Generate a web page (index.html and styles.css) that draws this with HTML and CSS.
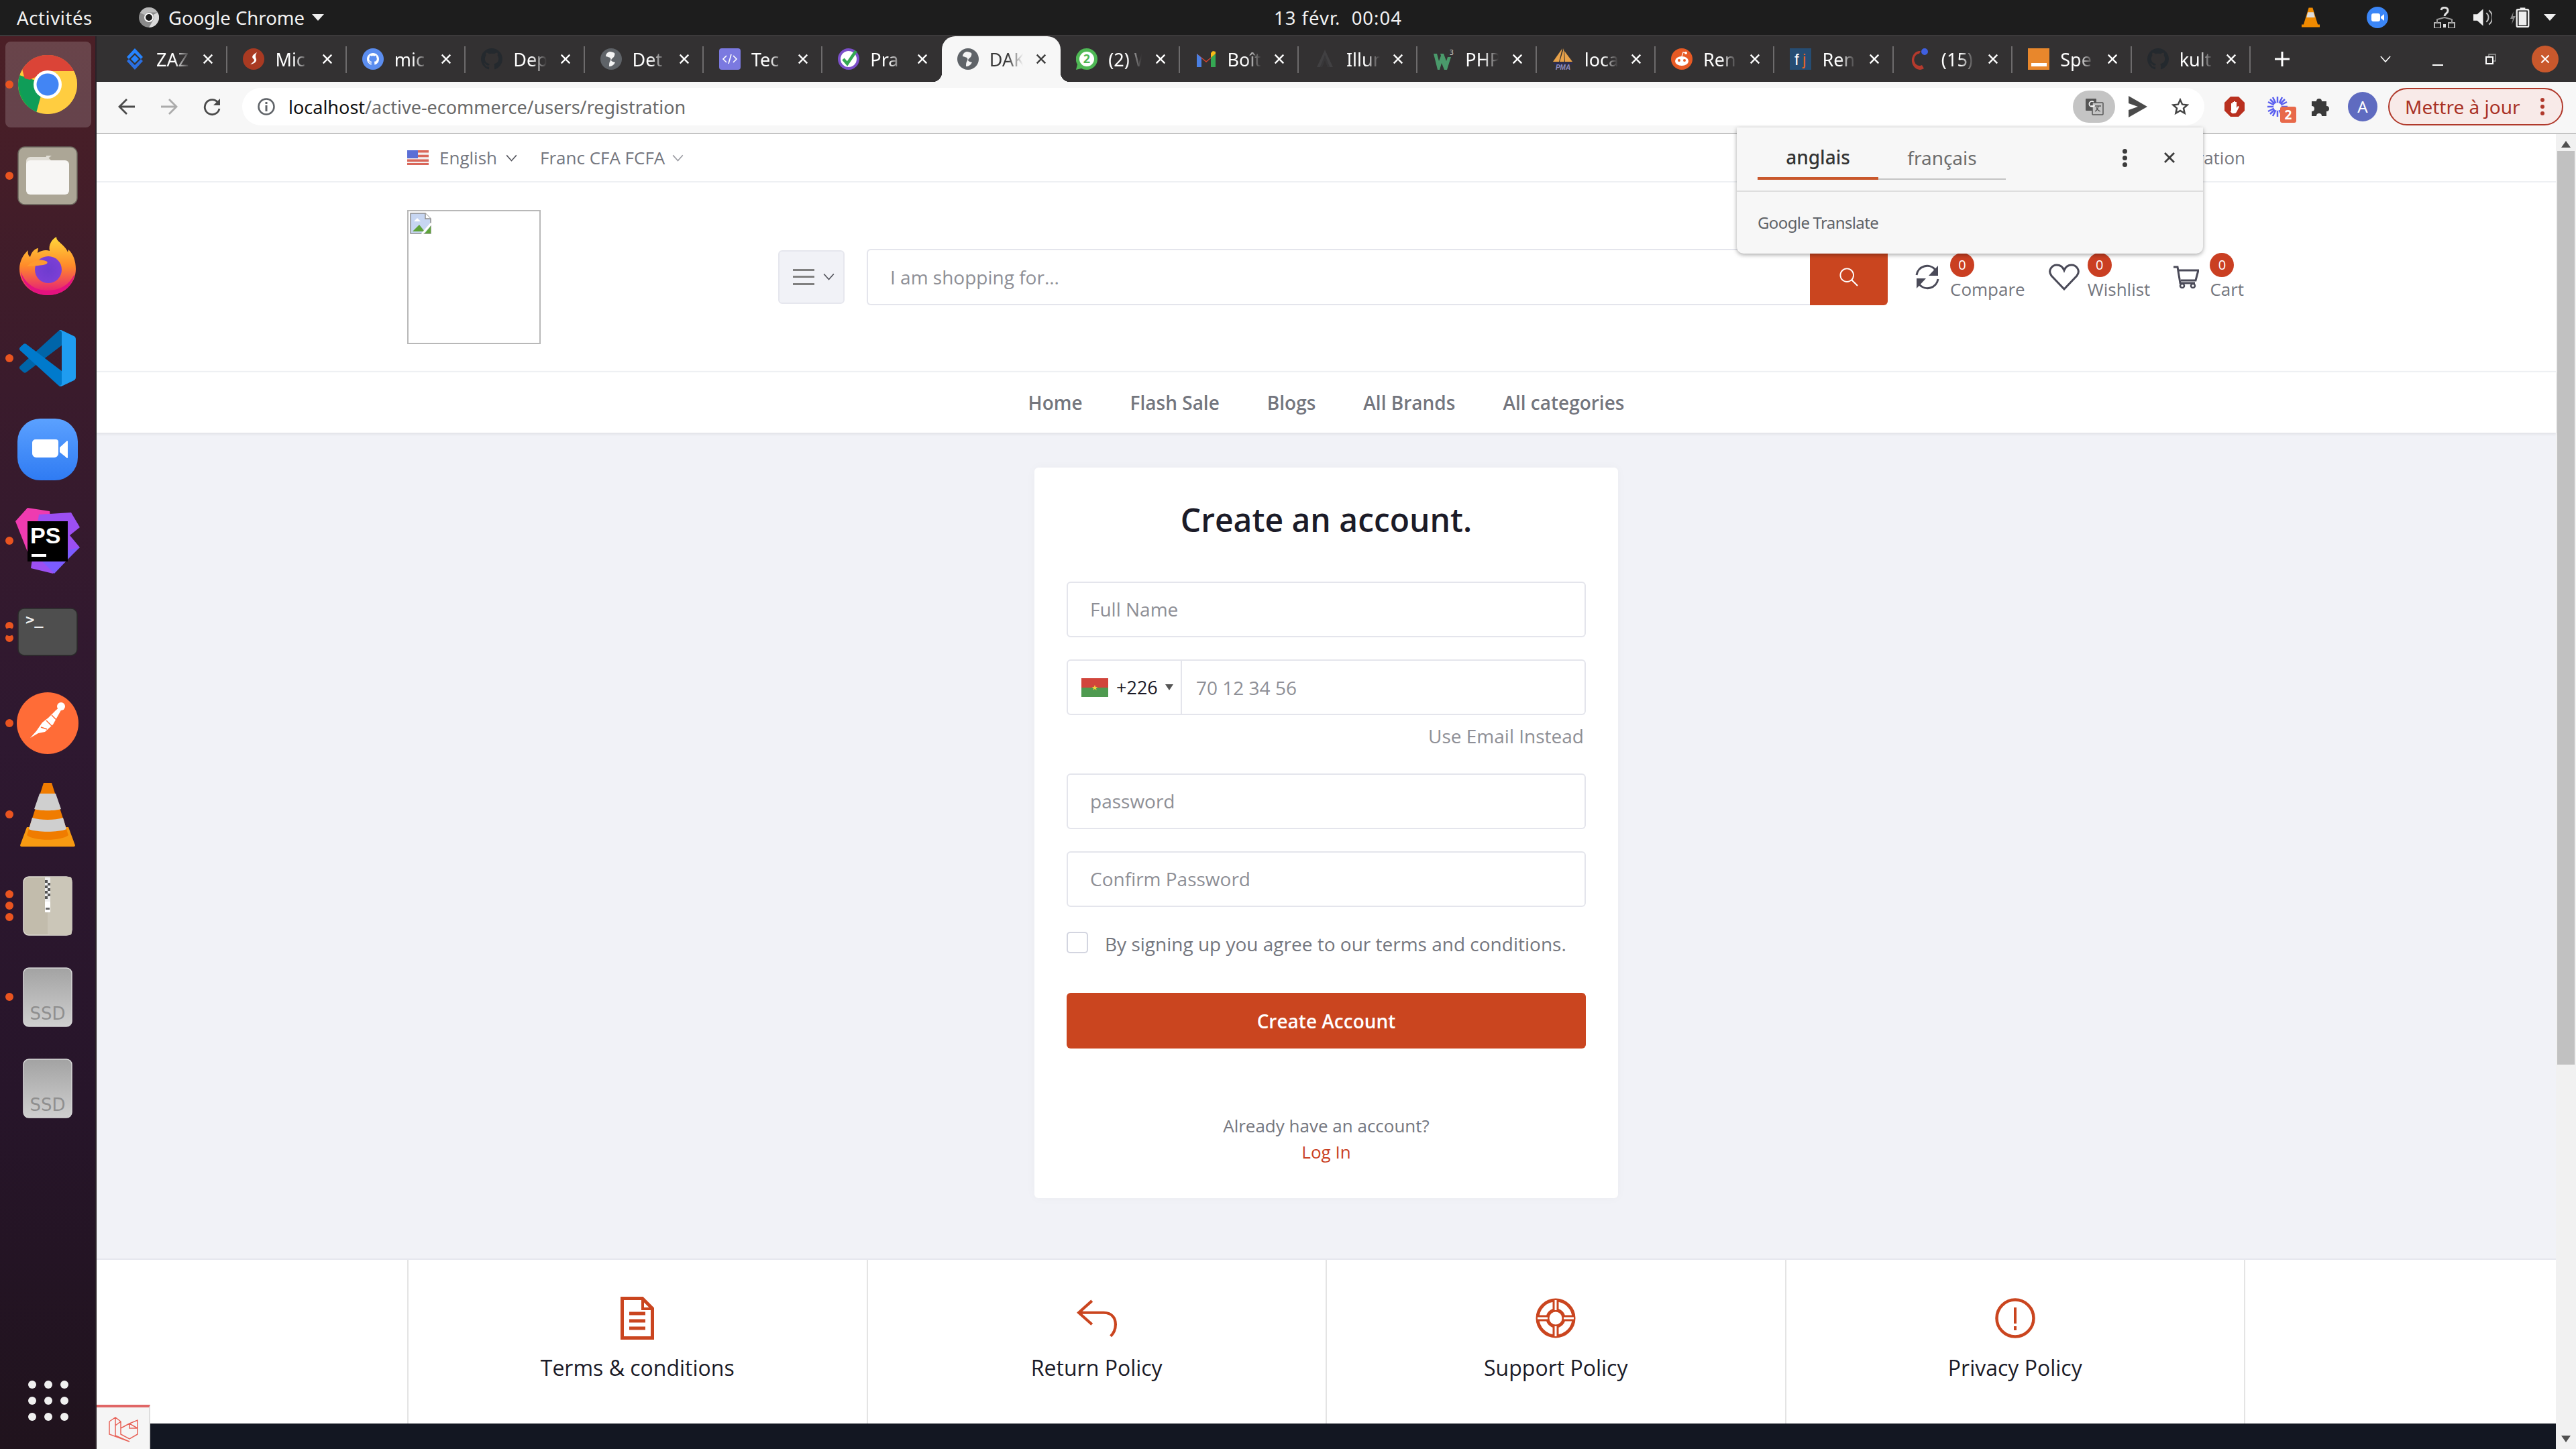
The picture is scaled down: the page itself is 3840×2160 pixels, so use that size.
FILE: index.html
```html
<!DOCTYPE html>
<html lang="fr">
<head>
<meta charset="utf-8">
<title>Create an account</title>
<link rel="stylesheet" href="styles.css">
</head>
<body>
<svg class="defs" width="0" height="0">
  <symbol id="gh" viewBox="0 0 16 16"><path d="M8 0C3.58 0 0 3.58 0 8c0 3.54 2.29 6.53 5.47 7.59.4.07.55-.17.55-.38 0-.19-.01-.82-.01-1.49-2.01.37-2.53-.49-2.69-.94-.09-.23-.48-.94-.82-1.13-.28-.15-.68-.52-.01-.53.63-.01 1.08.58 1.23.82.72 1.21 1.87.87 2.33.66.07-.52.28-.87.51-1.07-1.78-.2-3.64-.89-3.64-3.95 0-.87.31-1.59.82-2.15-.08-.2-.36-1.02.08-2.12 0 0 .67-.21 2.2.82.64-.18 1.32-.27 2-.27.68 0 1.36.09 2 .27 1.53-1.04 2.2-.82 2.2-.82.44 1.1.16 1.92.08 2.12.51.56.82 1.27.82 2.15 0 3.07-1.87 3.75-3.65 3.95.29.25.54.73.54 1.48 0 1.07-.01 1.93-.01 2.2 0 .21.15.46.55.38A8.013 8.013 0 0016 8c0-4.42-3.58-8-8-8z"/></symbol>
  <symbol id="globe" viewBox="0 0 32 32"><circle cx="16" cy="16" r="16" fill="#5f6368"/><path d="M14 5c-4 1-6 4-6 7 3 1 6 1 7 3 1 2 0 3-1 5-1 2-1 4-1 7 4 0 7-2 9-6-2-1-5-1-6-3 0-2 2-3 4-5 1-2 2-4 1-6-2-1-4-2-7-2z" fill="#f4f4f4"/></symbol>
  <symbol id="x" viewBox="0 0 20 20"><path d="M3 3l14 14M17 3L3 17" fill="none" stroke="currentColor" stroke-width="2.6"/></symbol>
  <symbol id="chev" viewBox="0 0 18 12"><path d="M1 1.5l8 9 8-9" fill="none" stroke="currentColor" stroke-width="1.7"/></symbol>
  <symbol id="ssd" viewBox="0 0 74 89"><defs><linearGradient id="ssdg" x1="0" y1="0" x2="0" y2="1"><stop offset="0" stop-color="#a3a3a3"/><stop offset="1" stop-color="#cfcfcf"/></linearGradient></defs><rect x="1" y="1" width="72" height="87" rx="8" fill="url(#ssdg)" stroke="#d8d8d8" stroke-width="1.5"/></symbol>
</svg>

<header class="system-bar">
  <span class="sys-left">
    <span class="sys-activities">Activités</span>
    <svg class="sys-chrome" viewBox="0 0 30 30"><circle cx="15" cy="15" r="15" fill="#8b8b8b"/><path d="M15 0a15 15 0 0 1 13 7.500H15a7.500 7.500 0 0 0-6.500 3.800L2 8A15 15 0 0 1 15 0z" fill="#b9b9b9"/><path d="M28 7.500A15 15 0 0 1 15 30l6.500-11.200A7.500 7.500 0 0 0 21.500 11z" fill="#d9d9d9"/><circle cx="15" cy="15" r="6" fill="#1d1d1d" stroke="#fff" stroke-width="2"/></svg>
    <span class="sys-app">Google Chrome</span>
    <i class="sys-caret"></i>
  </span>
  <span class="sys-clock">13 févr.&nbsp; 00:04</span>
  <span class="sys-tray">
    <svg class="tray-vlc" viewBox="0 0 28 30"><path d="M11 0h6l8 26h3v4H0v-4h3z" fill="#f08a00"/><path d="M9.500 7h9l2 8H7.500z" fill="#ddd"/></svg>
    <svg class="tray-zoom" viewBox="0 0 32 32"><circle cx="16" cy="16" r="16" fill="#3b86f7"/><rect x="7" y="10" width="13" height="12" rx="3" fill="#fff"/><path d="M21 15l5-4v10l-5-4z" fill="#fff"/></svg>
    <svg class="tray-net" viewBox="0 0 32 32"><rect x="1" y="24" width="9" height="8" fill="none" stroke="#b5b5b5" stroke-width="2"/><rect x="22" y="24" width="9" height="8" fill="none" stroke="#b5b5b5" stroke-width="2"/><path d="M5 24v-5l11-3 11 3v5" fill="none" stroke="#9a9a9a" stroke-width="2"/><path d="M11 5c1-5 10-5 10 1 0 4-5 4-5 8" fill="none" stroke="#e0e0e0" stroke-width="3"/><rect x="14" y="26" width="4" height="5" fill="#e0e0e0"/></svg>
    <svg class="tray-vol" viewBox="0 0 30 30"><path d="M1 10h6l9-8v26l-9-8H1z" fill="#eee"/><path d="M21 8a9 9 0 0 1 0 14M25 4a14 14 0 0 1 0 22" fill="none" stroke="#bbb" stroke-width="2"/></svg>
    <svg class="tray-bat" viewBox="0 0 36 30"><path d="M5 6L0 17h4l-2 9 6-13H4z" fill="#888"/><rect x="10" y="3" width="18" height="26.500" rx="2" fill="none" stroke="#eee" stroke-width="2.500"/><rect x="15" y="0" width="8" height="3" fill="#eee"/><rect x="13" y="6" width="12" height="21" fill="#eee"/></svg>
    <i class="sys-caret"></i>
  </span>
</header>

<div class="desktop">
  <nav class="dock">
    <div class="dock-item active"><i class="pip"></i>
      <svg class="d-chrome" viewBox="0 0 88 88"><defs><clipPath id="cc"><circle cx="44" cy="44" r="44"/></clipPath></defs><g clip-path="url(#cc)"><rect width="88" height="88" fill="#ffca3a"/><path d="M44 44L2 30 -6 88H26z" fill="#12a150"/><path d="M0-2H88V24H44L11 40z" fill="#db4437"/><path d="M44 44L-8 30 26 100H34z" fill="#0f9d58"/><path d="M88 24H44L26 90 44 100H100V24z" fill="#ffcd40"/><path d="M-2 -4H90V24H44C36 24 28 28 24 34L6 8z" fill="#db4437"/></g><circle cx="44" cy="44" r="21" fill="#fff"/><circle cx="44" cy="44" r="16.500" fill="#4285f4"/></svg>
    </div>
    <div class="dock-item"><i class="pip"></i>
      <svg class="d-files" viewBox="0 0 90 88"><rect x="1" y="1" width="88" height="86" rx="10" fill="#aca696" stroke="#6a665c" stroke-width="1.500"/><path d="M13 22a6 6 0 0 1 6-6h26l6 6v6H13z" fill="#e1ded6"/><rect x="13" y="21" width="64" height="51" rx="6" fill="#f7f6f4"/><path d="M42 21l9-7h-8z" fill="#e1ded6"/></svg>
    </div>
    <div class="dock-item raise">
      <svg class="d-firefox" viewBox="0 0 84 87"><defs><linearGradient id="ff1" x1="0.5" y1="0" x2="0.5" y2="1"><stop offset="0" stop-color="#ffd83a"/><stop offset="0.5" stop-color="#ff8a2a"/><stop offset="1" stop-color="#e3127f"/></linearGradient><radialGradient id="ff2"><stop offset="0" stop-color="#6e3ccf"/><stop offset="1" stop-color="#7b3fd6"/></radialGradient></defs><path d="M42 87C18 87 0 70 0 48 0 36 6 26 13 20c-1 4 0 8 3 10 2-8 8-13 12-13l-1 7c6-4 13-5 18-3C43 12 48 4 55 0c0 6 6 8 11 14 3 3 5 6 6 9l1-4c7 6 11 17 11 29 0 22-18 39-42 39z" fill="url(#ff1)"/><circle cx="43" cy="49" r="20" fill="url(#ff2)"/><path d="M11 44c8-8 18-12 28-8 4 1 3 4 0 5-7 2-14 2-28 3z" fill="#ff9a2f"/><path d="M2 52c6 18 22 28 40 28 18 0 32-8 40-24-3 20-20 31-40 31C22 87 4 72 2 52z" fill="#e3127f"/></svg>
    </div>
    <div class="dock-item"><i class="pip"></i>
      <svg class="d-code" viewBox="0 0 100 100" preserveAspectRatio="none"><path fill="#0065A9" d="M96.46 10.8 75.86.87a6.230 6.230 0 0 0-7.100 1.200L1.300 63.600a4.160 4.160 0 0 0 0 6.160l5.500 5a4.160 4.160 0 0 0 5.300.24L93.300 13.400c2.730-2.070 6.630-.13 6.630 3.300v-.24a6.250 6.250 0 0 0-3.470-5.660Z"/><path fill="#007ACC" d="m96.460 89.200-20.600 9.920a6.230 6.230 0 0 1-7.100-1.200L1.300 36.400a4.160 4.160 0 0 1 0-6.160l5.500-5a4.160 4.160 0 0 1 5.300-.24L93.300 86.600c2.730 2.070 6.630.13 6.630-3.300v.24a6.250 6.250 0 0 1-3.470 5.660Z"/><path fill="#1F9CF0" d="M75.860 99.130a6.230 6.230 0 0 1-7.100-1.200c2.300 2.300 6.240.67 6.240-2.600V4.670c0-3.270-3.940-4.900-6.240-2.600a6.230 6.230 0 0 1 7.100-1.200l20.600 9.900A6.250 6.250 0 0 1 100 16.400v67.200a6.250 6.250 0 0 1-3.540 5.630Z"/></svg>
    </div>
    <div class="dock-item">
      <svg class="d-zoom" viewBox="0 0 90 92"><defs><linearGradient id="zg" x1="0" y1="0" x2="0" y2="1"><stop offset="0" stop-color="#5ba1ff"/><stop offset="1" stop-color="#2f7bf3"/></linearGradient></defs><rect width="90" height="92" rx="34" fill="url(#zg)"/><path d="M22 36a5 5 0 0 1 5-5h30a4 4 0 0 1 4 4v17a6 6 0 0 1-6 6H28a6 6 0 0 1-6-6zM63 43l10-9a1 1 0 0 1 2 0v24a1 1 0 0 1-2 0l-10-8z" fill="#fff"/></svg>
    </div>
    <div class="dock-item"><i class="pip"></i>
      <svg class="d-ps" viewBox="0 0 96 98"><path d="M0 20l18-20 33 5 8 60-40 3z" fill="#ef3bb0"/><path d="M35 10l48-3 13 22-15 12 15 18-40 39-33-8z" fill="#9c4ff2"/><path d="M35 75l60-16-37 39z" fill="#7b5cff"/><rect x="18" y="20" width="60" height="60" fill="#000"/><text class="ps-text" x="22" y="53">PS</text><rect x="24" y="69" width="22" height="4" fill="#fff"/></svg>
    </div>
    <div class="dock-item"><i class="pip double"></i>
      <svg class="d-term" viewBox="0 0 90 72"><rect x="1" y="1" width="88" height="70" rx="9" fill="#4e4e4e" stroke="#2a2a2a" stroke-width="1.500"/><text class="term-text" x="12" y="25">&gt;_</text></svg>
    </div>
    <div class="dock-item"><i class="pip"></i>
      <svg class="d-post" viewBox="0 0 92 92"><circle cx="46" cy="46" r="46" fill="#ff6c37"/><path d="M20 68l12-7 10-2 12-11 9-16 5-9-3-2-7 6-11 11-9 7-9 13z" fill="#fff"/><path d="M36 52l9 3M44 42l8 8M52 34l7 7" stroke="#ff6c37" stroke-width="1.500" fill="none"/><circle cx="66" cy="21" r="6" fill="#fff"/></svg>
    </div>
    <div class="dock-item"><i class="pip"></i>
      <svg class="d-vlc" viewBox="0 0 82 95"><path d="M10 66h62l10 27a2 2 0 0 1-2 2H2a2 2 0 0 1-2-2z" fill="#f79a12"/><path d="M35 0h12l25 78c-10 9-52 9-62 0z" fill="#f07c00"/><path d="M29 16h24l8 23c-8 3-32 3-40 0z" fill="#cfcfcf"/><path d="M18 52c12 4 34 4 46 0l5 17c-12 5-44 5-56 0z" fill="#cfcfcf"/></svg>
    </div>
    <div class="dock-item"><i class="pip triple"></i>
      <svg class="d-zip" viewBox="0 0 74 89"><rect x="1" y="1" width="72" height="87" rx="8" fill="#c2bcac" stroke="#dedbd2" stroke-width="1.500"/><rect x="37" y="1" width="36" height="87" rx="4" fill="#cbc6b8"/><rect x="33" y="2" width="8" height="38" fill="#efefef"/><path d="M33 6h4v4h-4zM37 10h4v4h-4zM33 14h4v4h-4zM37 18h4v4h-4zM33 22h4v4h-4zM37 26h4v4h-4zM33 30h4v4h-4z" fill="#555"/><rect x="33" y="38" width="8" height="16" rx="1" fill="#fff"/><rect x="34" y="47" width="6" height="3" fill="#666"/></svg>
    </div>
    <div class="dock-item"><i class="pip"></i>
      <svg class="d-ssd" viewBox="0 0 74 89"><use href="#ssd"/><text class="ssd-text" x="37" y="78">SSD</text></svg>
    </div>
    <div class="dock-item">
      <svg class="d-ssd" viewBox="0 0 74 89"><use href="#ssd"/><text class="ssd-text" x="37" y="78">SSD</text></svg>
    </div>
    <div class="dock-apps">
      <i></i><i></i><i></i><i></i><i></i><i></i><i></i><i></i><i></i>
    </div>
  </nav>

  <main class="browser">
    <div class="tabstrip">
      <div class="tabs">
        <div class="tab"><svg class="fav" viewBox="0 0 32 32"><path d="M16 0l12 13-3 3-9-9-9 9-3-3z" fill="#2684ff"/><path d="M16 32L4 19l3-3 9 9 9-9 3 3z" fill="#2b6fe0"/><path d="M16 10l6 6-6 6-6-6z" fill="#2684ff"/></svg><span class="tab-title">ZAZ</span><svg class="tab-x"><use href="#x"/></svg></div>
        <div class="tab"><svg class="fav" viewBox="0 0 32 32"><circle cx="16" cy="16" r="16" fill="#a93a22"/><path d="M21 6c-6 3-9 7-5 10 3 2-1 5-5 8 6-1 10-4 9-8-1-3-2-5 1-10z" fill="#fff"/></svg><span class="tab-title">Mic</span><svg class="tab-x"><use href="#x"/></svg></div>
        <div class="tab"><svg class="fav" viewBox="0 0 32 32"><circle cx="16" cy="16" r="16" fill="#5b8def"/><use href="#gh" x="7" y="7" width="18" height="18" fill="#fff"/></svg><span class="tab-title">mic</span><svg class="tab-x"><use href="#x"/></svg></div>
        <div class="tab"><svg class="fav" viewBox="0 0 16 16" fill="#24292e"><use href="#gh"/></svg><span class="tab-title">Dep</span><svg class="tab-x"><use href="#x"/></svg></div>
        <div class="tab"><svg class="fav"><use href="#globe"/></svg><span class="tab-title">Det</span><svg class="tab-x"><use href="#x"/></svg></div>
        <div class="tab"><svg class="fav" viewBox="0 0 32 32"><rect width="32" height="32" rx="4" fill="#7b79e0"/><path d="M11 11l-5 5 5 5M21 11l5 5-5 5M18 9l-4 14" fill="none" stroke="#fff" stroke-width="1.600"/></svg><span class="tab-title">Tec</span><svg class="tab-x"><use href="#x"/></svg></div>
        <div class="tab no-sep"><svg class="fav" viewBox="0 0 32 32"><circle cx="16" cy="16" r="14" fill="#fff" stroke="#7b4fc9" stroke-width="4"/><path d="M8 16l6 7L27 4" fill="none" stroke="#35a853" stroke-width="4.500"/></svg><span class="tab-title">Pra</span><svg class="tab-x"><use href="#x"/></svg></div>
        <div class="tab active"><svg class="fav"><use href="#globe"/></svg><span class="tab-title">DAK</span><svg class="tab-x"><use href="#x"/></svg></div>
        <div class="tab"><svg class="fav" viewBox="0 0 32 32"><path d="M16 0a16 16 0 0 1 0 32c-3 0-6-1-8-2l-8 2 2-8A16 16 0 0 1 16 0z" fill="#4fb855"/><circle cx="16" cy="16" r="11" fill="#fff"/><text class="wa-text" x="16" y="22">2</text></svg><span class="tab-title">(2) W</span><svg class="tab-x"><use href="#x"/></svg></div>
        <div class="tab"><svg class="fav" viewBox="0 0 32 32"><path d="M2 28V8l14 11L30 8v20h-7V15l-7 6-7-6v13z" fill="#d9432f"/><path d="M2 28h7V14L2 8z" fill="#4a7fe3"/><path d="M23 28h7V8l-7 6z" fill="#35a853"/><path d="M23 14l7-6V5l-4-1-3 3z" fill="#f6bb17"/></svg><span class="tab-title">Boît</span><svg class="tab-x"><use href="#x"/></svg></div>
        <div class="tab"><svg class="fav" viewBox="0 0 32 32"><path d="M16 2l12 26h-5L16 12 9 28H4z" fill="#414042"/><path d="M16 10l7 18h-3l-4-10-4 10H9z" fill="#383739"/></svg><span class="tab-title">Illum</span><svg class="tab-x"><use href="#x"/></svg></div>
        <div class="tab"><svg class="fav" viewBox="0 0 32 32"><path d="M1 8h5l3 11 3-8-1-3h5l4 11 2-6h5l-6 19h-4l-4-10-3 10H7z" fill="#4a9a6b"/><text class="w3-text" x="25" y="10">3</text></svg><span class="tab-title">PHP</span><svg class="tab-x"><use href="#x"/></svg></div>
        <div class="tab"><svg class="fav" viewBox="0 0 32 32"><path d="M15 0L10 20H1zM17 0l1 20h-7zM18 4l12 16H19z" fill="#e8a24a"/><path d="M2 21h28v3H2z" fill="#2d2c55"/><text class="pma-text" x="16" y="32">PMA</text></svg><span class="tab-title">loca</span><svg class="tab-x"><use href="#x"/></svg></div>
        <div class="tab"><svg class="fav" viewBox="0 0 32 32"><circle cx="16" cy="16" r="16" fill="#e85a24"/><ellipse cx="16" cy="19" rx="10" ry="7" fill="#fff"/><circle cx="12" cy="18" r="2" fill="#e85a24"/><circle cx="20" cy="18" r="2" fill="#e85a24"/><circle cx="22" cy="7" r="2" fill="#fff"/><path d="M16 12l2-6 4 1" fill="none" stroke="#fff" stroke-width="1.200"/></svg><span class="tab-title">Ren</span><svg class="tab-x"><use href="#x"/></svg></div>
        <div class="tab"><svg class="fav" viewBox="0 0 32 32"><rect width="32" height="32" fill="#264d73"/><text class="fj-text" x="7" y="25">f</text><text class="fj-text fj-j" x="19" y="25">j</text></svg><span class="tab-title">Ren</span><svg class="tab-x"><use href="#x"/></svg></div>
        <div class="tab"><svg class="fav" viewBox="0 0 32 32"><path d="M17 4A12 14 0 1 0 22 30l-3-5a8 9 0 1 1-4-17z" fill="#b53a2d"/><circle cx="23" cy="5" r="5" fill="#3f5fe0"/></svg><span class="tab-title">(15)</span><svg class="tab-x"><use href="#x"/></svg></div>
        <div class="tab"><svg class="fav" viewBox="0 0 32 32"><rect width="32" height="32" fill="#e8872c"/><rect x="5" y="22" width="23" height="5" fill="#fff"/></svg><span class="tab-title">Spe</span><svg class="tab-x"><use href="#x"/></svg></div>
        <div class="tab last"><svg class="fav" viewBox="0 0 16 16" fill="#24292e"><use href="#gh"/></svg><span class="tab-title">kult</span><svg class="tab-x"><use href="#x"/></svg></div>
      </div>
      <svg class="win-plus" viewBox="0 0 24 24"><path d="M12 1v22M1 12h22" stroke="#fff" stroke-width="3"/></svg>
      <svg class="win-down"><use href="#chev"/></svg>
      <i class="win-min"></i>
      <svg class="win-restore" viewBox="0 0 16 16"><rect x="1" y="5" width="10" height="10" fill="none" stroke="#fff" stroke-width="2"/><path d="M5 4V1h10v10h-3" fill="none" stroke="#999" stroke-width="1.400"/></svg>
      <span class="win-close"><svg viewBox="0 0 20 20"><use href="#x"/></svg></span>
    </div>

    <div class="toolbar">
      <svg class="tb-back" viewBox="0 0 26 26"><path d="M25 13H3M13 2L2 13l11 11" fill="none" stroke="currentColor" stroke-width="2.800"/></svg>
      <svg class="tb-fwd" viewBox="0 0 26 26"><path d="M1 13h22M13 2l11 11-11 11" fill="none" stroke="currentColor" stroke-width="2.800"/></svg>
      <svg class="tb-reload" viewBox="0 0 28 28"><path d="M23 8a11 11 0 1 0 2 9" fill="none" stroke="currentColor" stroke-width="2.800"/><path d="M26 2v10H16z" fill="currentColor"/></svg>
      <div class="omnibox">
        <svg class="omni-info" viewBox="0 0 26 26"><circle cx="13" cy="13" r="11.500" fill="none" stroke="#5f6368" stroke-width="2.500"/><rect x="11.500" y="11" width="3" height="9" fill="#5f6368"/><rect x="11.500" y="6" width="3" height="3" fill="#5f6368"/></svg>
        <span class="omni-url"><b>localhost</b>/active-ecommerce/users/registration</span>
        <span class="omni-translate"><svg viewBox="0 0 28 28"><rect x="1" y="2" width="16" height="18" rx="1" fill="#555"/><rect x="11" y="8" width="16" height="18" rx="1" fill="#c4c4c4" stroke="#555" stroke-width="1.500"/><path d="M13 7a4 4 0 1 0 0 6H9" fill="none" stroke="#fff" stroke-width="1.600"/><path d="M15 13h9M20 13c-1 5-3 7-5 8M17 15c1 3 3 5 6 6" fill="none" stroke="#555" stroke-width="1.300"/></svg></span>
        <svg class="omni-send" viewBox="0 0 28 32"><path d="M0 0l28 16L0 32v-11l14-5L0 11z" fill="#4a4a4a"/></svg>
        <svg class="omni-star" viewBox="0 0 24 24"><path d="M12 2.500l2.900 6.400 6.900.7-5.200 4.600 1.500 6.800-6.100-3.500-6.100 3.500 1.500-6.800L2.200 9.600l6.900-.7z" fill="none" stroke="#444" stroke-width="2.300"/></svg>
      </div>
      <svg class="ext-block" viewBox="0 0 32 32"><path d="M10 1h12l9 9v12l-9 9H10l-9-9V10z" fill="#b9301f"/><path d="M11 22V11h2v6-8h2v8-9h2v9-8h2v9l2-3 2 1-4 8a4 4 0 0 1-3 2h-1a4 4 0 0 1-5-4z" fill="#fff"/></svg>
      <span class="ext-burst"><svg viewBox="0 0 32 32"><path d="M16 1v30M1 16h30M5 5l22 22M27 5L5 27M9 2l14 28M23 2L9 30M2 9l28 14M30 9L2 23" stroke="#5a5ff0" stroke-width="2.500"/><circle cx="16" cy="16" r="6" fill="#f7f7f7"/></svg><b>2</b></span>
      <svg class="ext-puzzle" viewBox="0 0 30 32"><path d="M2 8h7a4 4 0 1 1 8 0h7v7a4 4 0 1 1 0 8v7h-7a4 4 0 1 0-8 0H2v-7a4 4 0 1 0 0-8z" fill="#3a3a3a"/></svg>
      <span class="avatar">A</span>
      <span class="update"><span>Mettre à jour</span><i class="update-dots"></i></span>
    </div>

    <div class="translate">
      <div class="tr-head">
        <div class="tr-tabs">
          <span class="tr-tab on">anglais</span>
          <span class="tr-tab">français</span>
        </div>
        <span class="tr-dots"></span>
        <svg class="tr-x" viewBox="0 0 20 20"><path d="M3 3l14 14M17 3L3 17" fill="none" stroke="#3c3c3c" stroke-width="2.800"/></svg>
      </div>
      <div class="tr-foot"><span class="tr-google">Google</span> <span class="tr-word">Translate</span></div>
    </div>

    <div class="viewport">
      <div class="page">
        <div class="topline">
          <div class="wrap topline-in">
            <svg class="flag-us" viewBox="0 0 32 22"><rect width="32" height="22" fill="#f3efef"/><path d="M0 0h32v3.400H0zM0 6.800h32v3.400H0zM0 13.600h32V17H0zM0 19h32v3H0z" fill="#d9675a"/><rect width="16" height="12" fill="#5b6fd6"/></svg>
            <span class="tl-item">English</span><svg class="tl-chev"><use href="#chev"/></svg>
            <span class="tl-item tl-currency">Franc CFA FCFA</span><svg class="tl-chev light"><use href="#chev"/></svg>
            <span class="tl-right">Registration</span>
          </div>
        </div>

        <div class="wrap head">
          <div class="logo"><svg class="broken" viewBox="0 0 32 32"><path d="M1 1h22l8 8v22H1z" fill="#c7d6f2" stroke="#8f8f8f" stroke-width="1.500"/><path d="M23 1v8h8" fill="#fff" stroke="#8f8f8f" stroke-width="1.500"/><path d="M4 28l10-10 8 10z" fill="#5fa33a"/><path d="M22 31l9-11v11z" fill="#5fa33a"/><path d="M18 32L32 16" stroke="#fff" stroke-width="3"/><path d="M6 13l5-5 5 5z" fill="#fff"/></svg></div>
          <div class="burger"><i class="bars"></i><svg class="burger-chev"><use href="#chev"/></svg></div>
          <div class="search">
            <input class="search-in" placeholder="I am shopping for...">
            <span class="search-btn"><svg viewBox="0 0 30 30"><circle cx="12" cy="12" r="10.500" fill="none" stroke="#fff" stroke-width="2"/><path d="M19.500 19.500L29 29" stroke="#fff" stroke-width="2.200"/></svg></span>
          </div>
          <div class="tools">
            <div class="tool"><svg class="tool-ic compare" viewBox="0 0 36 40"><path d="M2 17A16 16 0 0 1 30 9M34 23A16 16 0 0 1 6 31" fill="none" stroke="#4a4a58" stroke-width="3"/><path d="M34 3v15H20zM2 37V22h14z" fill="#4a4a58"/></svg><div class="tool-col"><span class="badge">0</span><span class="tool-label">Compare</span></div></div>
            <div class="tool"><svg class="tool-ic heart" viewBox="0 0 46 40"><path d="M23 38L4 18C-2 10 5 2 12 2c5 0 9 3 11 8 2-5 6-8 11-8 7 0 14 8 8 16z" fill="none" stroke="#4a4a58" stroke-width="3"/></svg><div class="tool-col"><span class="badge">0</span><span class="tool-label">Wishlist</span></div></div>
            <div class="tool"><svg class="tool-ic cart" viewBox="0 0 38 34"><path d="M0 2h6l4 24h22M8 7h29l-4 15H11" fill="none" stroke="#4a4a58" stroke-width="3"/><circle cx="13" cy="30" r="3" fill="none" stroke="#4a4a58" stroke-width="2.500"/><circle cx="29" cy="30" r="3" fill="none" stroke="#4a4a58" stroke-width="2.500"/></svg><div class="tool-col"><span class="badge">0</span><span class="tool-label">Cart</span></div></div>
          </div>
        </div>

        <nav class="mainnav">
          <a>Home</a><a>Flash Sale</a><a>Blogs</a><a>All Brands</a><a>All categories</a>
        </nav>

        <section class="main">
          <form class="card">
            <h1 class="card-title">Create an account.</h1>
            <input class="field" placeholder="Full Name">
            <div class="phone">
              <span class="dial"><svg class="flag-bf" viewBox="0 0 40 28"><rect width="40" height="14" fill="#d1453b"/><rect y="14" width="40" height="14" fill="#4f9a50"/><path d="M20 10l1.200 3h3l-2.400 2 1 3-2.800-1.900-2.800 1.900 1-3-2.400-2h3z" fill="#f3d23c"/></svg><span class="dial-code">+226</span><i class="dial-caret"></i></span>
              <input class="phone-in" placeholder="70 12 34 56">
            </div>
            <div class="use-email">Use Email Instead</div>
            <input class="field" placeholder="password">
            <input class="field second" placeholder="Confirm Password">
            <label class="agree"><i class="check"></i><span>By signing up you agree to our terms and conditions.</span></label>
            <div class="submit">Create Account</div>
            <p class="have">Already have an account?</p>
            <a class="login">Log In</a>
          </form>
        </section>

        <section class="policies">
          <div class="wrap policy-grid">
            <div class="policy"><svg class="p-ic" viewBox="0 0 50 64"><path d="M2.500 2.500h30l15 15v44h-45z" fill="none" stroke="#ca451f" stroke-width="5"/><path d="M33 3v15h15" fill="none" stroke="#ca451f" stroke-width="4"/><path d="M13 25h24M13 36h24M13 47h24" stroke="#ca451f" stroke-width="5"/></svg><span class="p-label">Terms &amp; conditions</span></div>
            <div class="policy"><svg class="p-ic" viewBox="0 0 58 54"><path d="M22 2L3 19l19 17M3 19h36c12 0 17 8 17 17 0 7-3 13-7 17" fill="none" stroke="#ca451f" stroke-width="4"/></svg><span class="p-label">Return Policy</span></div>
            <div class="policy"><svg class="p-ic" viewBox="0 0 60 60"><circle cx="30" cy="30" r="27" fill="none" stroke="#ca451f" stroke-width="5"/><circle cx="30" cy="30" r="12" fill="none" stroke="#ca451f" stroke-width="5"/><path d="M30 3v15M30 42v15M3 30h15M42 30h15" stroke="#ca451f" stroke-width="9"/><path d="M30 3v15M30 42v15M3 30h15M42 30h15" stroke="#fff" stroke-width="3"/></svg><span class="p-label">Support Policy</span></div>
            <div class="policy"><svg class="p-ic" viewBox="0 0 60 60"><circle cx="30" cy="30" r="27.500" fill="none" stroke="#ca451f" stroke-width="4.500"/><path d="M30 14v24M30 42v6" stroke="#ca451f" stroke-width="4"/></svg><span class="p-label">Privacy Policy</span></div>
          </div>
        </section>
        <footer class="darkbar"></footer>
      </div>
      <aside class="scrollbar"><i class="sb-up"></i><i class="sb-thumb"></i><i class="sb-down"></i></aside>
    </div>

    <div class="debugbar"><svg viewBox="0 0 44 40"><path d="M1 9l9-6 8 6v19l13 7 12-7v-9l-12-7-13 7M10 3v27l21 9M18 9l-8 6M31 12v7l12 0M31 12l-13 7 0 9M31 12l12-5 0 12M1 9v19l30 11" fill="none" stroke="#e8645a" stroke-width="1.500"/></svg></div>
  </main>
</div>
</body>
</html>
```

FILE: styles.css
```css
* { box-sizing: border-box; }
html, body { margin: 0; height: 100%; overflow: hidden; }
body { width: 3840px; height: 2160px; display: flex; flex-direction: column; font-family: "Open Sans", sans-serif; background: #fff; }
i { display: block; font-style: normal; }
svg { display: block; flex: none; }
.defs { position: absolute; }

/* system bar */
.system-bar { height: 54px; flex: none; background: #1d1d1d; color: #f2f2f2; display: grid; grid-template-columns: 1899px auto 1fr; align-items: center; font-family: "Noto Sans", sans-serif; font-size: 27.5px; border-bottom: 2px solid #3c3a3b; }
.sys-left { display: flex; align-items: center; }
.sys-activities { margin-left: 25px; width: 112px; white-space: nowrap; letter-spacing: .6px; }
.sys-chrome { width: 30px; height: 30px; margin-left: 70px; }
.sys-app { margin-left: 14px; white-space: nowrap; }
.sys-caret { width: 0; height: 0; border-left: 9px solid transparent; border-right: 9px solid transparent; border-top: 10px solid #eee; }
.sys-left .sys-caret { margin-left: 11px; }
.sys-clock { letter-spacing: 1px; white-space: nowrap; }
.sys-tray { display: flex; align-items: center; justify-content: flex-end; padding-right: 30px; }
.tray-vlc { width: 27px; height: 30px; }
.tray-zoom { width: 32px; height: 32px; margin-left: 70px; }
.tray-net { width: 32px; height: 32px; margin-left: 68px; }
.tray-vol { width: 29px; height: 30px; margin-left: 26px; }
.tray-bat { width: 35px; height: 30px; margin-left: 27px; }
.sys-tray .sys-caret { margin-left: 15px; }

.desktop { flex: 1; display: flex; min-height: 0; }

/* dock */
.dock { width: 144px; flex: none; background: linear-gradient(180deg, #4b1f26 0%, #3a1b2c 25%, #2e1830 50%, #27152a 75%, #20131d 100%); display: flex; flex-direction: column; padding-top: 4px; border-right: 2px solid #2a2228; }
.dock-item { position: relative; height: 136px; flex: none; display: flex; align-items: center; justify-content: center; }
.dock-item.raise { padding-bottom: 4px; }
.dock-item.active::before { content: ""; position: absolute; left: 8px; top: 4px; width: 128px; height: 128px; border-radius: 8px; background: rgba(255,255,255,.17); }
.dock-item svg { position: relative; }
.pip { position: absolute; left: 8px; top: 62px; width: 12px; height: 12px; border-radius: 50%; background: #e95420; }
.pip.double { box-shadow: 0 -9px 0 #e95420, 0 9px 0 #e95420; background: transparent; }
.pip.triple { box-shadow: 0 -17px 0 #e95420, 0 17px 0 #e95420; }
.d-chrome { width: 88px; height: 88px; }
.d-files { width: 90px; height: 88px; }
.d-firefox { width: 84px; height: 87px; }
.d-code { width: 84px; height: 84px; }
.d-zoom { width: 90px; height: 92px; }
.d-ps { width: 96px; height: 98px; }
.d-term { width: 90px; height: 72px; }
.d-post { width: 92px; height: 92px; }
.d-vlc { width: 82px; height: 95px; }
.d-zip, .d-ssd { width: 74px; height: 89px; }
.ps-text { font: 800 34px "Liberation Sans", sans-serif; fill: #fff; }
.term-text { font: 700 22px "DejaVu Sans Mono", monospace; fill: #eee; }
.ssd-text { font: 400 26px "DejaVu Sans", sans-serif; fill: #8f8f8f; text-anchor: middle; }
.dock-apps { margin-top: auto; margin-bottom: 42px; margin-left: 42px; display: grid; grid-template-columns: repeat(3, 12px); gap: 12px; }
.dock-apps i { width: 12px; height: 12px; border-radius: 50%; background: #f0f0f0; }

/* browser */
.browser { position: relative; flex: 1; min-width: 0; display: flex; flex-direction: column; }
.tabstrip { height: 68px; flex: none; background: #333132; display: flex; align-items: center; padding-left: 18px; color: #fff; }
.tabs { width: 3193px; display: flex; height: 100%; }
.tab { position: relative; flex: 1 1 0; display: flex; align-items: center; padding: 0 20px 0 23px; font-family: "Noto Sans", sans-serif; font-size: 27px; }
.tab::after { content: ""; position: absolute; right: 0; top: 15px; width: 2px; height: 40px; background: #6d6b6c; }
.tab.no-sep::after { display: none; }
.tab.active { background: #f7f7f7; color: #3a3a3a; border-radius: 20px 20px 0 0; }
.tab.active::before, .tab.active::after { content: ""; position: absolute; top: auto; bottom: 0; width: 14px; height: 14px; z-index: 1; }
.tab.active::before { left: -14px; background: radial-gradient(circle at 0 0, transparent 14px, #f7f7f7 14.500px); }
.tab.active::after { right: -14px; background: radial-gradient(circle at 100% 0, transparent 14px, #f7f7f7 14.500px); }
.fav { width: 32px; height: 32px; }
.tab-title { width: 50px; margin-left: 16px; overflow: hidden; white-space: nowrap; -webkit-mask-image: linear-gradient(90deg, #000 55%, transparent 100%); mask-image: linear-gradient(90deg, #000 55%, transparent 100%); }
.tab-x { width: 18px; height: 18px; margin-left: auto; color: inherit; }
.wa-text { font: 700 18px "Noto Sans", sans-serif; fill: #4fb855; text-anchor: middle; }
.w3-text { font: 400 10px "Noto Sans", sans-serif; fill: #d8d8d8; }
.pma-text { font: italic 700 10px "Liberation Sans", sans-serif; fill: #8f8dc8; text-anchor: middle; }
.fj-text { font: 400 24px "Liberation Sans", sans-serif; fill: #fff; }
.fj-j { fill: #e8632a; }
.win-plus { width: 24px; height: 24px; margin-left: 35px; }
.win-down { width: 16px; height: 12px; margin-left: 134px; color: #fff; }
.win-min { width: 16px; height: 2px; background: #fff; margin-left: 62px; margin-top: 18px; }
.win-restore { width: 16px; height: 16px; margin-left: 63px; }
.win-close { width: 40px; height: 40px; margin-left: 53px; border-radius: 50%; background: #c9582c; display: flex; align-items: center; justify-content: center; color: #fff; }
.win-close svg { width: 16px; height: 16px; }

.toolbar { height: 78px; flex: none; background: #f7f7f7; border-bottom: 2px solid #c4c4c4; display: flex; align-items: center; color: #3a3a3a; padding: 0 19px 2px 32px; }
.tb-back { width: 26px; height: 26px; color: #4a4a4a; }
.tb-fwd { width: 26px; height: 26px; margin-left: 37px; color: #ababab; }
.tb-reload { width: 28px; height: 28px; margin-left: 37px; color: #4a4a4a; }
.omnibox { width: 2925px; height: 56px; margin-left: 31px; border-radius: 28px; background: #fff; display: flex; align-items: center; padding-left: 23px; flex: none; }
.omni-info { width: 26px; height: 26px; }
.omni-url { margin-left: 20px; font-family: "Noto Sans", sans-serif; font-size: 27px; color: #6a6a6a; white-space: nowrap; }
.omni-url b { font-weight: 400; color: #111; }
.omni-translate { margin-left: auto; width: 63px; height: 48px; border-radius: 24px; background: #c4c4c4; display: flex; align-items: center; justify-content: center; }
.omni-translate svg { width: 28px; height: 28px; }
.omni-send { width: 28px; height: 32px; margin-left: 20px; }
.omni-star { width: 26px; height: 26px; margin-left: 36px; margin-right: 23px; }
.ext-block { width: 32px; height: 32px; margin-left: 29px; }
.ext-burst { position: relative; width: 32px; height: 32px; margin-left: 32px; display: block; }
.ext-burst svg { width: 32px; height: 32px; }
.ext-burst b { position: absolute; left: 20px; top: 16px; width: 24px; height: 24px; background: #e8694a; border-radius: 3px; color: #fff; font: 700 19px/24px "Noto Sans", sans-serif; text-align: center; }
.ext-puzzle { width: 30px; height: 32px; margin-left: 33px; }
.avatar { width: 44px; height: 44px; margin-left: 26px; border-radius: 50%; background: #5f6bc0; color: #fff; font: 400 24px/44px "Noto Sans", sans-serif; text-align: center; flex: none; }
.update { width: 261px; height: 56px; margin-left: 16px; border: 2px solid #b0392b; border-radius: 28px; background: #f8eae8; color: #a93226; display: flex; align-items: center; padding-left: 23px; font-family: "Noto Sans", sans-serif; font-size: 28px; white-space: nowrap; flex: none; }
.update-dots { width: 6px; height: 6px; border-radius: 50%; background: #b0392b; box-shadow: 0 -10px 0 #b0392b, 0 10px 0 #b0392b; margin-left: 30px; }

/* translate bubble */
.translate { position: absolute; left: 2445px; top: 136px; width: 695px; height: 188px; background: #f7f7f7; border-radius: 0 0 10px 10px; box-shadow: 0 2px 6px rgba(0,0,0,.35); z-index: 5; display: flex; flex-direction: column; font-family: "Noto Sans", sans-serif; }
.tr-head { height: 96px; flex: none; border-bottom: 2px solid #dedede; display: flex; padding: 0 40px 0 31px; position: relative; }
.tr-tabs { width: 380px; height: 78px; display: flex; border-bottom: 2px solid #c4c4c4; }
.tr-tab { width: 190px; height: 78px; padding-top: 12px; display: flex; align-items: center; justify-content: center; font-size: 28px; color: #6d6d6d; }
.tr-tab.on { width: 180px; color: #333; font-weight: 500; border-bottom: 4px solid #c9582c; padding-top: 14px; }
.tr-dots { width: 7px; height: 7px; border-radius: 50%; background: #3c3c3c; box-shadow: 0 -10px 0 #3c3c3c, 0 10px 0 #3c3c3c; margin: 42px 0 0 174px; }
.tr-x { width: 20px; height: 20px; margin: 35px 0 0 53px; }
.tr-foot { display: flex; align-items: baseline; gap: 5px; padding: 29px 0 0 31px; color: #5f6368; font-size: 24px; letter-spacing: -.6px; }

/* page */
.viewport { flex: 1; display: flex; min-height: 0; }
.page { flex: 1; min-width: 0; display: flex; flex-direction: column; background: #fff; }
.scrollbar { width: 30px; flex: none; background: #f1f1f1; display: flex; flex-direction: column; align-items: center; }
.sb-up { width: 0; height: 0; border-left: 7px solid transparent; border-right: 7px solid transparent; border-bottom: 10px solid #505050; margin-top: 10px; }
.sb-thumb { width: 26px; height: 1362px; margin-top: 5px; background: #c1c1c1; }
.sb-down { width: 0; height: 0; border-left: 7px solid transparent; border-right: 7px solid transparent; border-top: 10px solid #505050; margin-top: auto; margin-bottom: 10px; }
.wrap { width: 2740px; margin: 0 auto; }

.topline { height: 72px; flex: none; border-bottom: 2px solid #eef0f3; }
.topline-in { height: 100%; display: flex; align-items: center; color: #74767e; font-size: 26px; }
.flag-us { width: 32px; height: 22px; }
.tl-item { margin-left: 16px; }
.tl-chev { width: 17px; height: 11px; margin-left: 13px; color: #55565e; }
.tl-chev.light { color: #9a9ba2; margin-left: 11px; }
.tl-currency { margin-left: 34px; }
.tl-right { margin-left: auto; }

.head { height: 281px; flex: none; display: flex; align-items: center; }
.logo { width: 199px; height: 200px; border: 2px solid #b8b8b8; padding: 2px 0 0 2px; flex: none; }
.broken { width: 32px; height: 32px; }
.burger { width: 99px; height: 80px; margin-left: 354px; background: #f1f2f7; border: 2px solid #e6e7ee; border-radius: 6px; display: flex; align-items: center; padding-left: 20px; flex: none; }
.bars { width: 32px; height: 24px; border-top: 3px solid #808080; border-bottom: 3px solid #808080; position: relative; }
.bars::after { content: ""; position: absolute; left: 0; right: 0; top: 7px; height: 3px; background: #808080; }
.burger-chev { width: 17px; height: 11px; margin-left: 13px; color: #55565e; }
.search { width: 1522px; height: 84px; margin-left: 33px; display: flex; flex: none; }
.search-in { flex: 1; min-width: 0; height: 100%; border: 2px solid #e4e5ec; border-right: 0; border-radius: 6px 0 0 6px; padding: 0 33px; font: 28px "Open Sans", sans-serif; outline: 0; }
.search-btn { width: 116px; background: #ca451f; border-radius: 0 6px 6px 0; display: flex; align-items: center; justify-content: center; }
.search-btn svg { width: 28px; height: 30px; }
input::placeholder { color: #8e8f96; opacity: 1; }
.tools { margin-left: 41px; display: flex; gap: 35px; }
.tool { display: flex; align-items: center; gap: 16px; }
.tool-ic.compare { width: 36px; height: 40px; }
.tool-ic.heart { width: 46px; height: 40px; margin-right: -4px; }
.tool-ic.cart { width: 38px; height: 34px; }
.tool-col { display: flex; flex-direction: column; align-items: flex-start; }
.badge { width: 36px; height: 36px; border-radius: 50%; background: #ca3f22; color: #fff; font-size: 20px; line-height: 36px; text-align: center; }
.tool-label { font-size: 26px; line-height: 36px; color: #74767e; }

.mainnav { position: relative; z-index: 1; height: 92px; flex: none; border-top: 2px solid #eef0f3; display: flex; justify-content: center; align-items: center; gap: 71px; background: #fff; box-shadow: 0 2px 4px rgba(0,0,0,.08); font-size: 28px; font-weight: 600; color: #74767e; }

.main { flex: 1; min-height: 0; background: #f1f2f7; padding-top: 52px; border-bottom: 2px solid #e6e7ee; }
.card { width: 870px; height: 1089px; margin: 0 auto; background: #fff; border-radius: 6px; padding: 44px 48px 0; box-shadow: 0 0 16px rgba(0,0,0,.03); display: flex; flex-direction: column; }
.card-title { margin: 0 0 58px; font-size: 48px; font-weight: 600; line-height: 68px; color: #1b1b28; text-align: center; }
.field { flex: none; width: 100%; height: 83px; border: 2px solid #e4e5ec; border-radius: 6px; padding: 0 33px 1px; font: 28px "Open Sans", sans-serif; outline: 0; }
.field.second { margin-top: 33px; }
.phone { flex: none; height: 83px; margin-top: 33px; border: 2px solid #e4e5ec; border-radius: 6px; display: flex; align-items: stretch; }
.dial { width: 170px; border-right: 2px solid #e4e5ec; display: flex; align-items: center; padding-left: 20px; flex: none; }
.flag-bf { width: 40px; height: 28px; }
.dial-code { margin-left: 12px; font-size: 27px; color: #1b1b28; }
.dial-caret { width: 0; height: 0; border-left: 6px solid transparent; border-right: 6px solid transparent; border-top: 9px solid #555; margin-left: 11px; }
.phone-in { flex: 1; min-width: 0; border: 0; background: transparent; padding: 0 21px; font: 28px "Open Sans", sans-serif; outline: 0; }
.use-email { height: 87px; padding: 12px 3px 0 0; text-align: right; font-size: 28px; line-height: 38px; color: #8e8f96; }
.agree { display: flex; align-items: center; height: 32px; margin-top: 37px; font-size: 28px; color: #74767e; white-space: nowrap; }
.check { width: 32px; height: 32px; border: 2px solid #d3d5e0; border-radius: 5px; flex: none; }
.agree span { margin-left: 25px; padding-top: 3px; }
.submit { height: 83px; margin-top: 59px; background: #ca451f; border-radius: 6px; color: #fff; font-size: 28px; font-weight: 600; line-height: 84px; text-align: center; }
.have { margin: 96px 0 0; font-size: 26px; line-height: 39px; color: #74767e; text-align: center; }
.login { font-size: 26px; line-height: 39px; color: #ca3f22; text-align: center; }

.policies { height: 244px; flex: none; background: #fff; }
.policy-grid { height: 100%; display: grid; grid-template-columns: repeat(4, 1fr); border-right: 2px solid #e4e4e4; }
.policy { border-left: 2px solid #e4e4e4; display: flex; flex-direction: column; align-items: center; padding-top: 55px; }
.p-ic { width: 60px; height: 64px; }
.p-label { margin-top: 19px; font-size: 32px; line-height: 46px; color: #1b1b28; }
.darkbar { height: 38px; flex: none; background: #131722; }

.debugbar { position: absolute; left: 0; bottom: 0; width: 80px; height: 66px; background: #f5f5f5; border-top: 4px solid #e06666; border-right: 2px solid #ddd; padding: 12px 0 0 18px; z-index: 4; }
.debugbar svg { width: 44px; height: 40px; }
```
